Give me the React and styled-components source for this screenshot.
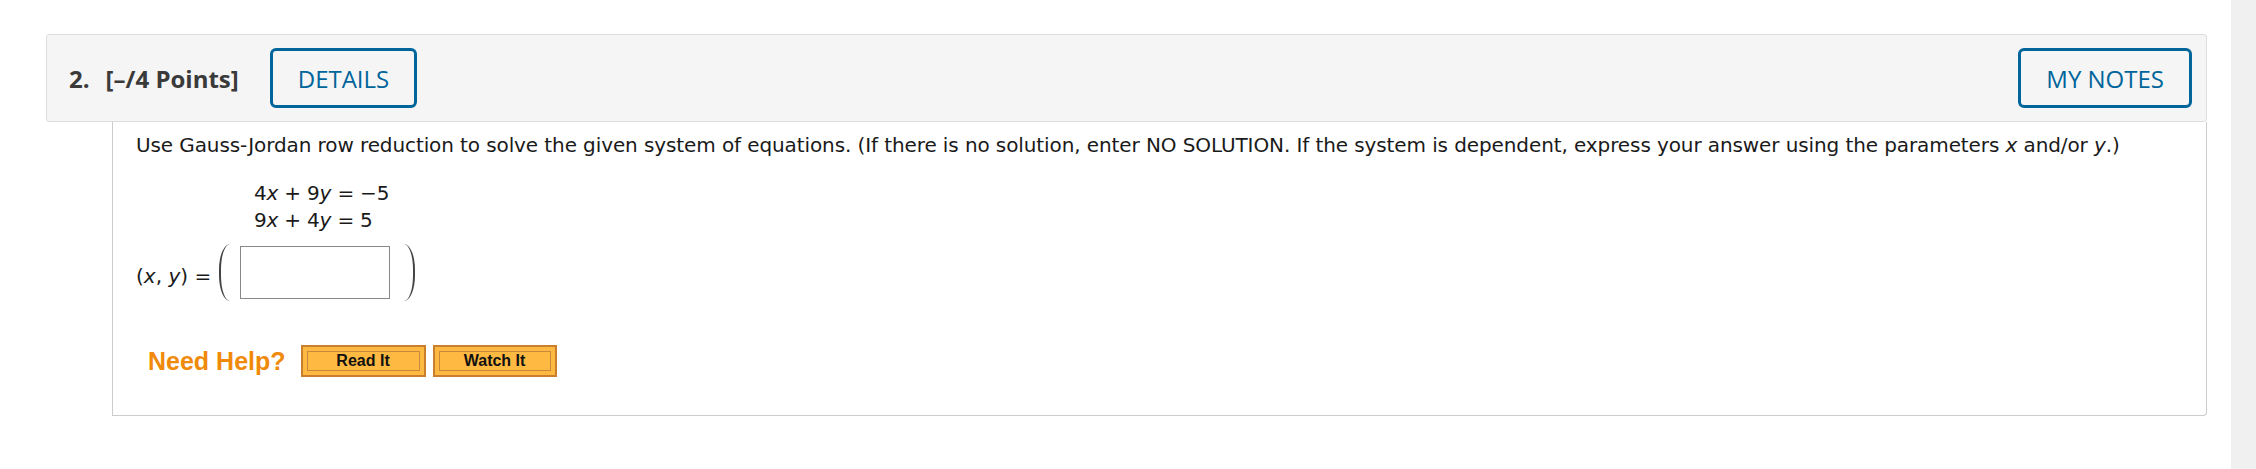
import styled, { createGlobalStyle } from "styled-components"

const GlobalStyle = createGlobalStyle`
  body {
    margin: 0;
    background: #fff;
  }
`

const Page = styled.div`
  display: flex;
  min-height: 469px;
`

const Main = styled.div`
  flex: 1;
  padding: 34px 24px 0 46px;
`

const ScrollTrack = styled.div`
  width: 25px;
  background: #f0f0f0;
`

const Header = styled.div`
  display: flex;
  justify-content: space-between;
  align-items: center;
  box-sizing: border-box;
  height: 88px;
  padding: 0 14px 0 22px;
  background: #f5f5f5;
  border: 1px solid #ddd;
  border-radius: 3px;
  font-family: "Open Sans", sans-serif;
`

const Title = styled.div`
  display: flex;
  align-items: center;
  font-size: 24px;
  font-weight: 700;
  color: #3a3a3a;

  .num {
    margin-right: 16px;
  }
`

const OutlineButton = styled.button`
  box-sizing: border-box;
  height: 60px;
  padding: 0 25px;
  margin-left: ${(p) => p.$gap || 0}px;
  background: transparent;
  border: 3px solid #00659b;
  border-radius: 6px;
  color: #00659b;
  font-family: "Open Sans", sans-serif;
  font-size: 24px;
  font-weight: 400;
  cursor: pointer;
`

const Body = styled.div`
  box-sizing: border-box;
  height: 294px;
  margin-left: 66px;
  padding: 9px 0 0 23px;
  border: 1px solid #ccc;
  border-top: none;
  border-radius: 0 0 4px 0;
  font-family: "DejaVu Sans", sans-serif;
  font-size: 20px;
  color: #1a1a1a;
`

const Prompt = styled.p`
  margin: 0;
  line-height: 28px;
  letter-spacing: -0.1px;
  white-space: nowrap;
`

const Equations = styled.div`
  margin: 21px 0 0 118px;
  line-height: 27px;
  letter-spacing: -0.2px;
`

const Var = styled.i`
  font-style: italic;
`

const AnswerRow = styled.div`
  display: flex;
  align-items: center;
  margin-top: 10px;

  .label {
    margin-top: 7px;
  }
`

const Paren = styled.span`
  box-sizing: border-box;
  width: 11px;
  height: 57px;
  border: 0 solid #444;
  border-left-width: ${(p) => (p.$right ? 0 : 2)}px;
  border-right-width: ${(p) => (p.$right ? 2 : 0)}px;
  border-radius: ${(p) => (p.$right ? "0 12px 12px 0 / 0 28px 28px 0" : "12px 0 0 12px / 28px 0 0 28px")};
  margin: ${(p) => (p.$right ? "0 0 0 14px" : "0 10px 0 8px")};
`

const AnswerBox = styled.input`
  box-sizing: border-box;
  width: 150px;
  height: 53px;
  border: 1px solid #888;
  background: #fff;
`

const HelpRow = styled.div`
  display: flex;
  align-items: center;
  margin: 44px 0 0 12px;
`

const HelpLabel = styled.span`
  font-family: "Liberation Sans", Arial, sans-serif;
  font-weight: 700;
  font-size: 25px;
  color: #f08a0a;
  margin-right: 15px;
`

const HelpButton = styled.button`
  box-sizing: border-box;
  width: ${(p) => p.$w}px;
  height: 32px;
  margin-right: 7px;
  padding: 0;
  background: #fdb941;
  border: 2px solid #c97f2c;
  box-shadow: inset 0 0 0 4px #fdb941, inset 0 0 0 5px #c9893c;
  font-family: "Liberation Sans", Arial, sans-serif;
  font-weight: 700;
  font-size: 16px;
  color: #111;
  cursor: pointer;
`

export default function App() {
  return (
    <Page>
      <GlobalStyle />
      <Main>
        <Header>
          <Title>
            <span className="num">2.</span>
            <span>[–/4 Points]</span>
            <OutlineButton $gap={31}>DETAILS</OutlineButton>
          </Title>
          <OutlineButton>MY NOTES</OutlineButton>
        </Header>
        <Body>
          <Prompt>
            Use Gauss-Jordan row reduction to solve the given system of equations. (If there is no solution, enter NO SOLUTION. If the system is dependent, express your answer using the parameters <Var>x</Var> and/or <Var>y</Var>.)
          </Prompt>
          <Equations>
            <div>4<Var>x</Var> + 9<Var>y</Var> = −5</div>
            <div>9<Var>x</Var> + 4<Var>y</Var> = 5</div>
          </Equations>
          <AnswerRow>
            <span className="label">(<Var>x</Var>, <Var>y</Var>) =</span>
            <Paren />
            <AnswerBox type="text" />
            <Paren $right />
          </AnswerRow>
          <HelpRow>
            <HelpLabel>Need Help?</HelpLabel>
            <HelpButton $w={125}>Read It</HelpButton>
            <HelpButton $w={124}>Watch It</HelpButton>
          </HelpRow>
        </Body>
      </Main>
      <ScrollTrack />
    </Page>
  )
}
